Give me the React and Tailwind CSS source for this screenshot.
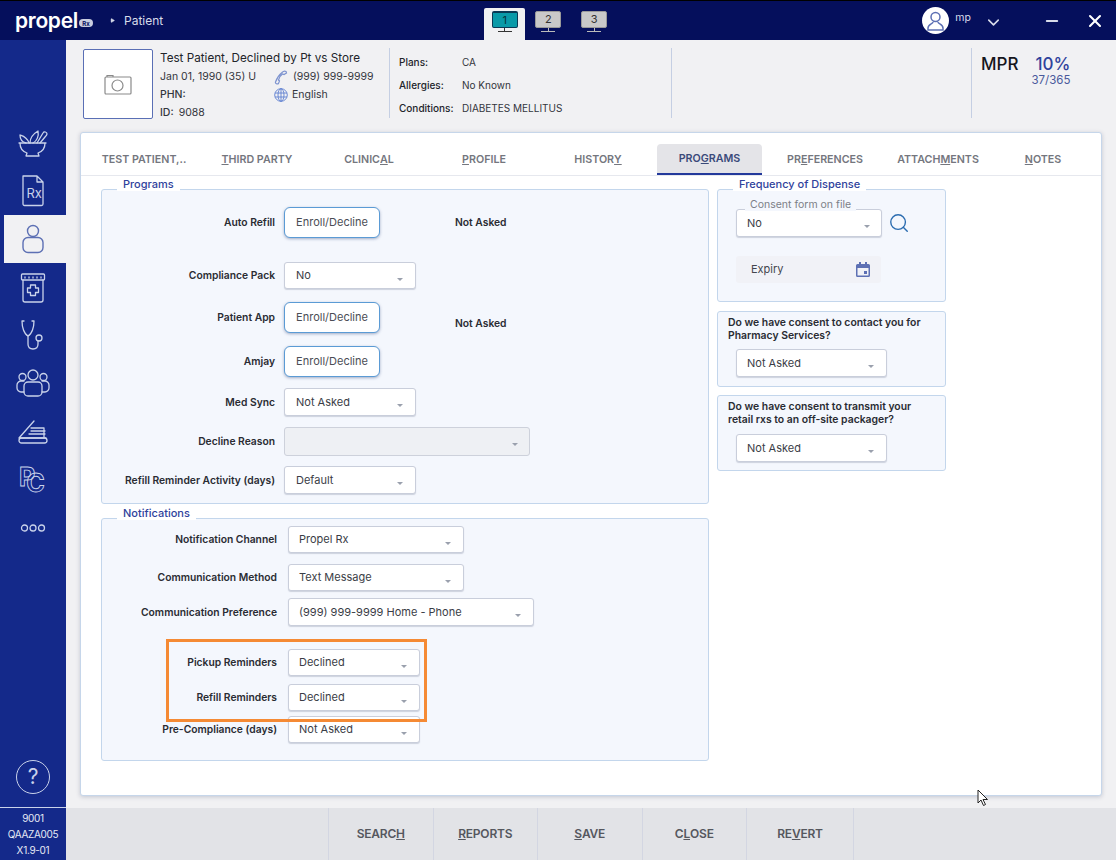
import React from 'react';
import { ChevronDown, Minus, X, Search, Play } from 'lucide-react';

const font = 'font-["Inter","Noto_Sans",sans-serif]';

const Caret = ({ className = '' }) => (
  <span className={`absolute top-[15px] border-x-[3.5px] border-t-[3.5px] border-x-transparent border-t-[#9aa0ad] ${className}`} />
);

const Select = ({ value, className = '', caret = 'right-[12px]', pad = 'pl-[10px]' }) => (
  <div className={`relative flex items-center rounded-[3px] border border-[#c9cedb] bg-white text-[11px] text-[#3a3d46] shadow-[0_1px_1px_rgba(90,100,130,0.25)] ${pad} ${className}`}>
    {value}
    <Caret className={caret} />
  </div>
);

const EnrollButton = () => (
  <button className="flex h-[31px] w-[96px] items-center justify-center rounded-[6px] border border-[#5b9bd5] bg-white text-[11px] text-[#4a4d55] shadow-[0_1px_3px_rgba(60,80,130,0.45)]">
    Enroll/Decline
  </button>
);

const Row = ({ label, width = 'w-[182px] pr-[9px]', className = '', children, note, noteClass = 'pt-[1px]' }) => (
  <div className={`flex items-center ${className}`}>
    <div className={`shrink-0 pt-[1px] text-right text-[10.3px] font-semibold text-[#2a2c33] ${width}`}>{label}</div>
    {children}
    {note && <div className={`ml-[75px] text-[10.3px] font-semibold text-[#2a2c33] ${noteClass}`}>{note}</div>}
  </div>
);

const Panel = ({ title, className = '', children }) => (
  <div className={`relative rounded-[3px] border border-[#c3d6ec] bg-[#f4f7fd] ${className}`}>
    {title && (
      <span className="absolute left-[15px] top-[-13px] bg-white px-[6px] text-[11px] leading-[14px] font-medium text-[#2f429c]">{title}</span>
    )}
    {children}
  </div>
);

const Tab = ({ before, u, after, width, active }) => (
  <div className={`flex h-[31px] shrink-0 items-center justify-center pt-[2px] text-[10.7px] font-semibold ${width} ${active ? 'rounded-t-[4px] border-b-2 border-[#23399b] bg-[#e4e4e8] text-[#3a4a7a]' : 'text-[#74767e]'}`}>
    {before}
    {u && <span className="underline">{u}</span>}
    {after}
  </div>
);

const ActionButton = ({ before, u, after, width = 'w-[104.5px]' }) => (
  <div className={`flex h-full items-center justify-center border-r border-[#d3d6e2] text-[12px] font-semibold tracking-[-0.2px] text-[#55575e] ${width}`}>
    {before}
    <span className="underline">{u}</span>
    {after}
  </div>
);

const Monitor = ({ n, active }) => (
  <div className="flex flex-col items-center">
    <div className={`flex h-[17px] w-[26px] items-center justify-center rounded-[2px] border text-[11px] ${active ? 'border-[#0a3a55] border-t-2 bg-[#0a9aa8] text-[#06323a]' : 'border-[#9a9a9a] bg-[#c9c9c9] text-[#333]'}`}>{n}</div>
    <div className={`h-[3px] w-px ${active ? 'bg-[#333]' : 'bg-[#bbb]'}`} />
    <div className={`h-px w-[14px] ${active ? 'bg-[#333]' : 'bg-[#bbb]'}`} />
  </div>
);

const stroke = { fill: 'none', stroke: '#c9d2ea', strokeWidth: 1.3, strokeLinecap: 'round', strokeLinejoin: 'round' };

const SideIcons = {
  mortar: (
    <svg width="32" height="30" viewBox="0 0 32 30" {...stroke}>
      <path d="M2 15h27M3 15c0 6 4 9 7 10l-1 3h13l-1-3c3-1 7-4 7-10" />
      <path d="M12 15C10 9 6 8 3 7c0 4 2 7 6 8M13 15c0-6 3-9 8-12 1 5-1 10-5 12" />
      <path d="M20 15l6-10c1-2 4-1 4 1 0 1-1 2-2 3l-5 6" />
    </svg>
  ),
  rx: (
    <svg width="24" height="32" viewBox="0 0 24 32" {...stroke}>
      <path d="M2 1h14l6 6v22a1.500 1.500 0 0 1-1.500 1.500h-17A1.500 1.500 0 0 1 2 29zM16 1v6h6" />
      <text x="5.500" y="23" fontSize="13" fill="#c9d2ea" stroke="none" fontFamily="Inter">Rx</text>
    </svg>
  ),
  user: (
    <svg width="24" height="30" viewBox="0 0 24 30" fill="none" stroke="#5d70b4" strokeWidth="1.400">
      <circle cx="12" cy="7" r="5.500" />
      <path d="M7 13.500h10a5 5 0 0 1 5 5v5a5 5 0 0 1-5 5H7a5 5 0 0 1-5-5v-5a5 5 0 0 1 5-5z" />
    </svg>
  ),
  jar: (
    <svg width="26" height="30" viewBox="0 0 26 30" {...stroke}>
      <rect x="1.500" y="1" width="23" height="6" rx="1" />
      <path d="M5 4v1M9 4v1M13 4v1M17 4v1M21 4v1" />
      <path d="M3 7v20a2 2 0 0 0 2 2h16a2 2 0 0 0 2-2V7" />
      <path d="M10.500 12h5v3h3v4.500h-3v3h-5v-3h-3V15h3z" />
    </svg>
  ),
  stetho: (
    <svg width="24" height="32" viewBox="0 0 24 32" {...stroke}>
      <path d="M3 2H1c0 6 2 13 6 15 4-2 6-9 6-15h-2" />
      <path d="M7 17v8c0 3 2 5 5 5s5-2 5-5v-3" />
      <circle cx="18" cy="19" r="3" />
    </svg>
  ),
  group: (
    <svg width="34" height="28" viewBox="0 0 34 28" {...stroke}>
      <circle cx="17" cy="6" r="5" />
      <circle cx="6.500" cy="8" r="3.500" />
      <circle cx="27.500" cy="8" r="3.500" />
      <path d="M12 13h10a4 4 0 0 1 4 4v6a4 4 0 0 1-4 4H12a4 4 0 0 1-4-4v-6a4 4 0 0 1 4-4z" />
      <path d="M8 23H5c-2 0-4-2-4-4v-3c0-2 2-4 4-4h3M26 23h3c2 0 4-2 4-4v-3c0-2-2-4-4-4h-3" />
    </svg>
  ),
  scanner: (
    <svg width="30" height="26" viewBox="0 0 30 26" {...stroke}>
      <path d="M1 19L16 2M1 19h27M13 12h14M11 15h16" />
      <rect x="1" y="19" width="28" height="5" rx="2.500" />
      <path d="M13 9h13v9" />
    </svg>
  ),
  pc: (
    <svg width="32" height="36" viewBox="0 0 32 36">
      <text x="2" y="24" fontSize="25" fontWeight="700" fontFamily="Inter" fill="none" stroke="#c9d2ea" strokeWidth="0.900">
        P<tspan dx="-9" dy="6">C</tspan>
      </text>
    </svg>
  ),
  dots: (
    <svg width="26" height="10" viewBox="0 0 26 10" {...stroke}>
      <circle cx="4.500" cy="5" r="3" />
      <circle cx="13" cy="5" r="3" />
      <circle cx="21.500" cy="5" r="3" />
    </svg>
  ),
};

const Sidebar = () => (
  <div className="flex w-[66px] shrink-0 flex-col bg-[#14298a]">
    <div className="flex h-[175px] flex-col items-center justify-end">
      <div className="flex h-[48px] items-center">{SideIcons.mortar}</div>
      <div className="flex h-[48px] items-center">{SideIcons.rx}</div>
    </div>
    <div className="ml-[4px] flex h-[48px] items-center justify-center bg-[#f1f1f3] pr-[4px]">{SideIcons.user}</div>
    <div className="flex flex-col items-center">
      <div className="flex h-[49px] items-center">{SideIcons.jar}</div>
      <div className="flex h-[46px] items-center">{SideIcons.stetho}</div>
      <div className="flex h-[50px] items-center">{SideIcons.group}</div>
      <div className="flex h-[48px] items-center">{SideIcons.scanner}</div>
      <div className="flex h-[48px] items-center">{SideIcons.pc}</div>
      <div className="flex h-[48px] items-center">{SideIcons.dots}</div>
    </div>
    <div className="mt-auto flex flex-col items-center">
      <div className="mb-[13px] flex h-[34px] w-[34px] items-center justify-center rounded-full border-[1.5px] border-[#c9d2ea] text-[21px] text-[#c9d2ea]">?</div>
      <div className="flex h-[53px] w-full flex-col items-center justify-center border-t border-[#c9d2ea] text-[10px] leading-[16px] tracking-[-0.3px] text-[#e6e9f5]">
        <span>9001</span>
        <span>QAAZA005</span>
        <span>X1.9-01</span>
      </div>
    </div>
  </div>
);

const Header = () => (
  <div className="flex h-[40px] items-center border-t border-black bg-[#050f5c] text-white">
    <div className="flex w-[110px] items-center pl-[15px]">
      <span className="text-[21px] leading-none font-semibold tracking-[-0.3px]">propel</span>
      <span className="ml-[1px] mt-[5px] flex h-[8px] w-[14px] items-center justify-center rounded-full bg-[#c9cde0] text-[6px] font-bold text-[#050f5c]">Rx</span>
    </div>
    <Play size={5} className="fill-[#d8dcea] text-[#d8dcea]" />
    <span className="ml-[9px] text-[12px] text-[#d8dcea]">Patient</span>
    <div className="ml-[321px] flex h-[39px] items-start self-end">
      <div className="mt-[7px] flex h-[32px] w-[41px] justify-center rounded-t-[2px] bg-[#f1f1f3] pt-[3px]"><Monitor n="1" active /></div>
      <div className="ml-[10px] pt-[10px]"><Monitor n="2" /></div>
      <div className="ml-[20px] pt-[10px]"><Monitor n="3" /></div>
    </div>
    <div className="ml-[315px] flex h-[27px] w-[27px] items-center justify-center rounded-full bg-white">
      <svg width="19" height="22" viewBox="0 0 19 22" fill="none" stroke="#5d70b4" strokeWidth="1.500">
        <circle cx="9.500" cy="7" r="4.500" />
        <path d="M7 12c0 2-5 2-5 6v2h15v-2c0-4-5-4-5-6" />
      </svg>
    </div>
    <span className="ml-[6px] mt-[-5px] text-[10.5px] text-[#d8dcea]">mp</span>
    <ChevronDown size={19} className="ml-[13px] mt-[3px] text-[#d8dcea]" />
    <Minus size={18} className="ml-[40px] text-[#d8dcea]" strokeWidth={2.500} />
    <X size={20} className="ml-[24px] text-white" strokeWidth={2.500} />
  </div>
);

const PatientInfo = () => (
  <div className="flex h-[91px] bg-[#f1f1f3] pl-[17px] pt-[8px]">
    <div className="mt-[1px] flex h-[70px] w-[70px] items-center justify-center rounded-[2px] border border-[#5a6fb5] bg-white">
      <svg width="28" height="21" viewBox="0 0 28 21" fill="none" stroke="#8a8a8a" strokeWidth="1.200">
        <rect x="1" y="3" width="26" height="17" rx="1" />
        <circle cx="13.500" cy="11.500" r="5.500" />
        <path d="M3 3V1.500h6V3" />
      </svg>
    </div>
    <div className="ml-[7px] w-[229px] text-[10.5px] text-[#33353c]">
      <div className="text-[11.7px] leading-[20px] text-[#22242a]">Test Patient, Declined by Pt vs Store</div>
      <div className="flex h-[18px] items-center">
        <span className="w-[114px]">Jan 01, 1990 (35) U</span>
        <svg width="14" height="15" viewBox="0 0 14 15" fill="none" stroke="#7d93cf" strokeWidth="1.200">
          <path d="M12 1.500c-2-1-3 0-4 1C5 5 2.500 9 1.500 12c-.5 1.500 2 2.500 3 1.500l1-2.500-1-1C5 8 7 5 8.500 4l1.500.5L12.500 3z" />
        </svg>
        <span className="ml-[5px]">(999) 999-9999</span>
      </div>
      <div className="flex h-[18px] items-center">
        <span className="w-[114px] font-medium">PHN:</span>
        <svg width="14" height="14" viewBox="0 0 14 14" fill="none" stroke="#5d7fd0" strokeWidth="0.900">
          <circle cx="7" cy="7" r="6.300" />
          <ellipse cx="7" cy="7" rx="3" ry="6.300" />
          <path d="M1 5h12M1 9h12M7 .7v12.600" />
        </svg>
        <span className="ml-[4px]">English</span>
      </div>
      <div className="flex h-[17px] items-center"><span className="font-medium">ID:</span><span className="ml-[5px]">9088</span></div>
    </div>
    <div className="h-[70px] w-px bg-[#c5cfe3]" />
    <div className="ml-[9px] w-[272px] pt-[3px] text-[10px] text-[#33353c]">
      {[['Plans:', 'CA'], ['Allergies:', 'No Known'], ['Conditions:', 'DIABETES MELLITUS']].map(([k, v]) => (
        <div key={k} className="flex h-[23px] items-center">
          <span className="w-[63px] font-medium text-[#22242a]">{k}</span>
          <span>{v}</span>
        </div>
      ))}
    </div>
    <div className="h-[70px] w-px bg-[#c5cfe3]" />
    <div className="w-[299px]" />
    <div className="h-[70px] w-px bg-[#c5cfe3]" />
    <div className="ml-[9px] flex">
      <span className="mt-[6px] text-[17px] leading-[20px] font-medium text-[#16171c]">MPR</span>
      <div className="ml-[13px] mt-[6px] flex flex-col items-end">
        <span className="text-[17px] leading-[20px] font-medium text-[#2f429c]">10%</span>
        <span className="text-[11.5px] leading-[13px] text-[#4a5a9c]">37/365</span>
      </div>
    </div>
  </div>
);

const Tabs = () => (
  <div className="flex h-[43px] items-end border-b border-[#e6e8ee] pl-[7px]">
    <Tab before="TEST PATIENT,.." width="w-[112px]" />
    <Tab u="T" after="HIRD PARTY" width="w-[114px]" />
    <Tab before="CLINIC" u="A" after="L" width="w-[110px]" />
    <Tab u="P" after="ROFILE" width="w-[120px]" />
    <Tab before="HISTOR" u="Y" width="w-[108px]" />
    <Tab before="PRO" u="G" after="RAMS" width="ml-[5px] w-[105px]" active />
    <Tab before="PR" u="E" after="FERENCES" width="w-[126px]" />
    <Tab before="ATTACH" u="M" after="ENTS" width="w-[100px]" />
    <Tab u="N" after="OTES" width="w-[110px]" />
  </div>
);

const Programs = () => (
  <Panel title="Programs" className="h-[315px] w-[608px] pt-[17px]">
    <Row label="Auto Refill" note="Not Asked"><EnrollButton /></Row>
    <Row label="Compliance Pack" className="mt-[24px]"><Select value="No" pad="pl-[11px]" className="h-[27px] w-[132px]" /></Row>
    <Row label="Patient App" className="mt-[13px]" note="Not Asked" noteClass="mt-[13px]"><EnrollButton /></Row>
    <Row label="Amjay" className="mt-[13px]"><EnrollButton /></Row>
    <Row label="Med Sync" className="mt-[11px]"><Select value="Not Asked" pad="pl-[11px]" className="h-[28px] w-[132px]" /></Row>
    <Row label="Decline Reason" className="mt-[11px]">
      <div className="relative h-[29px] w-[246px] rounded-[3px] border border-[#cdd1db] bg-[#eef0f4]"><Caret className="right-[11px]" /></div>
    </Row>
    <Row label="Refill Reminder Activity (days)" className="mt-[10px]"><Select value="Default" pad="pl-[11px]" className="h-[28px] w-[132px]" /></Row>
  </Panel>
);

const notifyLabel = 'w-[186px] pr-[11px]';

const Notifications = () => (
  <Panel title="Notifications" className="mt-[14px] h-[243px] w-[608px] pt-[7px]">
    <Row label="Notification Channel" width={notifyLabel}><Select value="Propel Rx" className="h-[27px] w-[176px]" /></Row>
    <Row label="Communication Method" width={notifyLabel} className="mt-[11px]"><Select value="Text Message" className="h-[27px] w-[176px]" /></Row>
    <Row label="Communication Preference" width={notifyLabel} className="mt-[7px]"><Select value="(999) 999-9999 Home - Phone" className="h-[28px] w-[246px]" /></Row>
    <Row label="Pickup Reminders" width={notifyLabel} className="mt-[23px]"><Select value="Declined" className="h-[27px] w-[132px]" /></Row>
    <Row label="Refill Reminders" width={notifyLabel} className="mt-[8px]"><Select value="Declined" className="h-[27px] w-[132px]" /></Row>
    <Row label="Pre-Compliance (days)" width={notifyLabel} className="mt-[5px]"><Select value="Not Asked" className="h-[27px] w-[132px]" /></Row>
    <div className="absolute left-[64px] top-[120px] h-[83px] w-[261px] border-[3px] border-[#f58a34]" />
  </Panel>
);

const RightColumn = () => (
  <div className="ml-[8px] w-[229px]">
    <Panel title="Frequency of Dispense" className="h-[113px] pl-[18px] pt-[19px]">
      <div className="flex items-center">
        <div className="relative">
          <Select value="No" className="h-[28px] w-[146px]" caret="right-[11px]" />
          <span className="absolute left-[9px] top-[-11px] bg-[#f4f7fd] px-[5px] text-[10.5px] leading-[13px] text-[#7c7f87]">Consent form on file</span>
        </div>
        <Search size={22} className="ml-[6px] text-[#2b6cb0]" strokeWidth={1.500} />
      </div>
      <div className="mt-[19px] flex h-[27px] w-[145px] items-center justify-between rounded-[3px] bg-[#f1f2f7] pl-[15px] pr-[11px] text-[11px] text-[#44464e]">
        Expiry
        <svg width="14" height="15" viewBox="0 0 14 15" fill="#5d70b4">
          <path d="M3 0h2v2h4V0h2v2h1.500A1.500 1.500 0 0 1 14 3.500v10a1.500 1.500 0 0 1-1.500 1.500h-11A1.500 1.500 0 0 1 0 13.500v-10A1.500 1.500 0 0 1 1.500 2H3zM1.500 6v7.500h11V6z" />
          <rect x="8" y="9" width="3" height="3" />
        </svg>
      </div>
    </Panel>
    <Panel className="mt-[9px] h-[76px] pl-[10px] pt-[5px]">
      <div className="text-[10.4px] leading-[12.500px] font-semibold text-[#2a2c33]">Do we have consent to contact you for<br />Pharmacy Services?</div>
      <Select value="Not Asked" className="ml-[8px] mt-[7px] h-[28px] w-[151px]" />
    </Panel>
    <Panel className="mt-[8px] h-[76px] pl-[10px] pt-[5px]">
      <div className="text-[10.4px] leading-[12.500px] font-semibold text-[#2a2c33]">Do we have consent to transmit your<br />retail rxs to an off-site packager?</div>
      <Select value="Not Asked" className="ml-[8px] mt-[8px] h-[28px] w-[151px]" />
    </Panel>
  </div>
);

export default function App() {
  return (
    <div className={`relative flex h-[860px] w-[1116px] flex-col overflow-hidden bg-[#f1f1f3] ${font}`}>
      <Header />
      <div className="flex min-h-0 flex-1">
        <Sidebar />
        <div className="flex min-w-0 flex-1 flex-col">
          <PatientInfo />
          <div className="ml-[14px] mt-[1px] h-[664px] w-[1022px] rounded-[3px] border border-[#c6d6ea] bg-white shadow-[0_1px_4px_rgba(90,100,130,0.3)]">
            <Tabs />
            <div className="flex pl-[20px] pt-[13px]">
              <div>
                <Programs />
                <Notifications />
              </div>
              <RightColumn />
            </div>
          </div>
          <div className="mt-auto flex h-[52px] bg-[#e2e3e7] pl-[262px]">
            <div className="flex h-full border-l border-[#d3d6e2]">
              <ActionButton before="SEARC" u="H" />
              <ActionButton u="R" after="EPORTS" />
              <ActionButton u="S" after="AVE" />
              <ActionButton before="C" u="L" after="OSE" />
              <ActionButton before="RE" u="V" after="ERT" width="w-[107px]" />
            </div>
          </div>
        </div>
      </div>
      <svg className="absolute left-[977px] top-[789px]" width="12" height="18" viewBox="0 0 12 18" fill="#fff" stroke="#222" strokeWidth="1">
        <path d="M1 1v13l3-3 2.500 5.500 2-1L6 10.500h4.500z" />
      </svg>
    </div>
  );
}
